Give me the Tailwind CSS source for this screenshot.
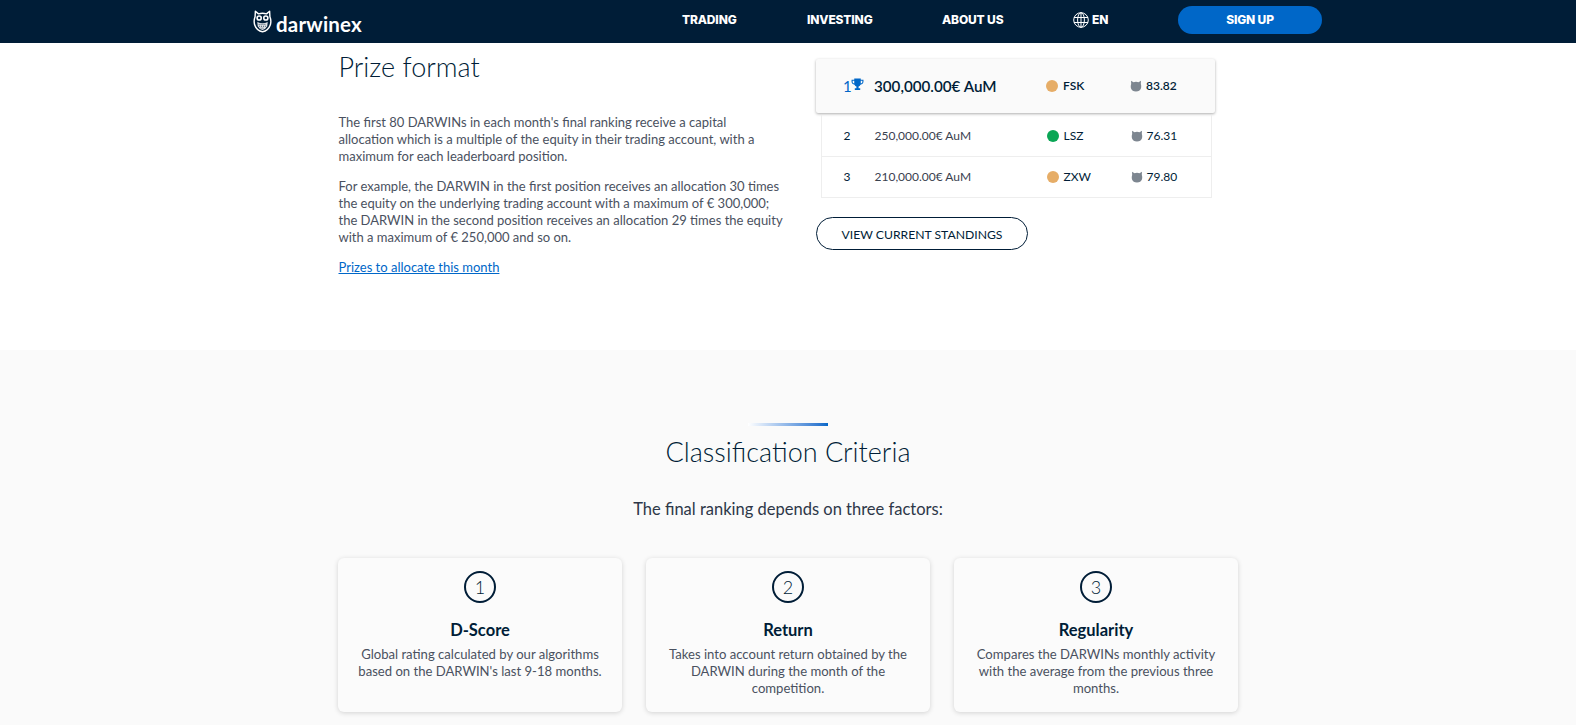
<!DOCTYPE html>
<html lang="en">
<head>
<meta charset="utf-8">
<title>Darwinex - Prize format</title>
<script src="https://cdn.jsdelivr.net/npm/@tailwindcss/browser@4"></script>
</head>
<body class="bg-white font-['Lato','Noto_Sans',sans-serif] text-[#4a5160] overflow-hidden">
<header class="h-[43px] bg-[#001d37] text-white">
  <div class="mx-auto flex h-full w-[1070px] items-center">
    <div class="mt-[5px] flex items-center gap-[4px]">
      <svg viewBox="0 0 20 24" class="h-[23px] w-[19px] -translate-y-[3px]" fill="none">
        <path d="M2.500 1.200 L5.800 4 Q10 2.800 14.200 4 L17.500 1.200 L17.800 7 Q19.500 11 18.300 15.500 Q16 22 10 22.800 Q4 22 1.700 15.500 Q.5 11 2.200 7 Z" fill="#001d37" stroke="#fff" stroke-width="1.500" stroke-linejoin="round"/>
        <circle cx="6.500" cy="8.300" r="3" fill="#fff"/><circle cx="13.500" cy="8.300" r="3" fill="#fff"/>
        <circle cx="6.500" cy="8.300" r="1.300" fill="#001d37"/><circle cx="13.500" cy="8.300" r="1.300" fill="#001d37"/>
        <path d="M4.500 12.500 Q10 15 15.500 12.500 L15 17 Q13 20.500 10 21 Q7 20.500 5 17 Z" fill="#dfe3e7"/>
        <path d="M6 15h8M6.500 17h7M8 19h4" stroke="#001d37" stroke-width=".8" stroke-dasharray="1 1"/>
      </svg>
      <span class="text-[20.5px] leading-none font-bold tracking-[0.2px] text-white">darwinex</span>
    </div>
    <nav class="mb-[3px] ml-[320px] flex items-center font-['Inter',sans-serif] text-[12px] font-extrabold tracking-[-0.15px]">
      <a class="w-[125px]">TRADING</a>
      <a class="w-[135px]">INVESTING</a>
      <a class="w-[131px]">ABOUT US</a>
      <span class="flex w-[105px] items-center gap-[3px]">
        <svg viewBox="0 0 16 16" class="size-[16px]" fill="none" stroke="#fff" stroke-width="1"><circle cx="8" cy="8" r="7.300"/><ellipse cx="8" cy="8" rx="3.400" ry="7.300"/><path d="M8 .7v14.600M1 5.500h14M1 10.500h14"/></svg>
        EN
      </span>
      <a class="flex h-[28px] w-[144px] items-center justify-center rounded-full bg-[#0067c8]">SIGN UP</a>
    </nav>
  </div>
</header>

<section class="h-[307px] bg-white">
  <div class="mx-auto flex w-[900px]">
    <div class="w-[478px] shrink-0 pr-[31px] pl-[0.5px]">
      <h2 class="mt-[6px] text-[27px] leading-[36px] font-light text-[#001d37]">Prize format</h2>
      <p class="mt-[29px] max-w-[436px] text-[13px] leading-[17px]">The first 80 DARWINs in each month's final ranking receive a capital allocation which is a multiple of the equity in their trading account, with a maximum for each leaderboard position.</p>
      <p class="mt-[13px] text-[13px] leading-[17px]">For example, the DARWIN in the first position receives an allocation 30 times the equity on the underlying trading account with a maximum of € 300,000; the DARWIN in the second position receives an allocation 29 times the equity with a maximum of € 250,000 and so on.</p>
      <a class="mt-[13px] block text-[13px] leading-[17px] text-[#0067c8] underline">Prizes to allocate this month</a>
    </div>
    <div class="w-[400px] pt-[16px] text-[#001d37]">
      <div class="grid h-[54px] w-[399px] grid-cols-[31px_172px_84px_1fr] items-center rounded-[2px] bg-[#fafafa] pl-[27px] shadow-[0_1px_3px_rgba(0,0,0,0.32)]">
        <span class="flex items-center text-[15px] text-[#0067c8]">1
          <svg viewBox="0 0 24 24" class="mb-[4px] -ml-[1px] size-[13px] shrink-0" fill="#0067c8"><path d="M6 1h12v2h5v4c0 3-2.500 5-5.500 5.300-.8 1.700-2.100 2.800-3.500 3.200V19h3v3H7v-3h3v-3.500c-1.400-.4-2.700-1.500-3.500-3.200C3.500 12 1 10 1 7V3h5V1zM3 5v2c0 1.700 1.300 3 3 3.300V5H3zm15 0v5.300c1.700-.3 3-1.600 3-3.300V5h-3z"/></svg>
        </span>
        <span class="text-[15.200px] font-semibold">300,000.00€ AuM</span>
        <span class="flex items-center gap-[5px] text-[12px] font-semibold"><i class="size-[12px] rounded-full bg-[#e6ad67]"></i>FSK</span>
        <span class="flex items-center gap-[4px] text-[12px] font-semibold"><svg viewBox="0 0 12 12" class="size-[12px]" fill="#7d8690"><path d="M1 .8l2.500 1.400a6 6 0 0 1 5 0L11 .8l-.2 3.200c1 2.500.7 7.500-4.800 7.500S.2 6.500 1.200 4z"/></svg>83.82</span>
      </div>
      <div class="mt-[2px] ml-[4.500px] w-[391px] border border-t-0 border-[#eeeeee] text-[12px]">
        <div class="grid h-[42px] grid-cols-[31px_172px_84px_1fr] items-center border-b border-[#eeeeee] pl-[22px]">
          <span>2</span><span class="text-[#39414f]">250,000.00€ AuM</span>
          <span class="flex items-center gap-[5px]"><i class="size-[12px] rounded-full bg-[#0aa655]"></i>LSZ</span>
          <span class="flex items-center gap-[4px]"><svg viewBox="0 0 12 12" class="size-[12px]" fill="#7d8690"><path d="M1 .8l2.500 1.400a6 6 0 0 1 5 0L11 .8l-.2 3.200c1 2.500.7 7.500-4.800 7.500S.2 6.500 1.200 4z"/></svg>76.31</span>
        </div>
        <div class="grid h-[40px] grid-cols-[31px_172px_84px_1fr] items-center pl-[22px]">
          <span>3</span><span class="text-[#39414f]">210,000.00€ AuM</span>
          <span class="flex items-center gap-[5px]"><i class="size-[12px] rounded-full bg-[#e6ad67]"></i>ZXW</span>
          <span class="flex items-center gap-[4px]"><svg viewBox="0 0 12 12" class="size-[12px]" fill="#7d8690"><path d="M1 .8l2.500 1.400a6 6 0 0 1 5 0L11 .8l-.2 3.200c1 2.500.7 7.500-4.800 7.500S.2 6.500 1.200 4z"/></svg>79.80</span>
        </div>
      </div>
      <a class="mt-[19px] flex h-[33px] w-[212px] items-center justify-center rounded-full border border-[#001d37] pt-[2px] text-[12.200px] leading-[18px] font-normal">VIEW CURRENT STANDINGS</a>
    </div>
  </div>
</section>

<section class="h-[375px] bg-[#fafafa] pt-[73px] text-center">
  <div class="mx-auto h-[3px] w-[80px] bg-gradient-to-r from-white to-[#0067c8]"></div>
  <h2 class="mt-[8px] text-[27px] leading-[36px] font-light text-[#001d37]">Classification Criteria</h2>
  <p class="mt-[27px] text-[16.500px] leading-[24px] text-[#2d3748]">The final ranking depends on three factors:</p>
  <div class="mx-auto mt-[37px] grid w-[900px] grid-cols-3 gap-[24px]">
    <article class="h-[154px] rounded-[6px] bg-[#fbfbfb] px-[16px] pt-[13px] shadow-[0_1px_5px_rgba(0,0,0,0.16)]">
      <div class="mx-auto flex size-[32px] items-center justify-center rounded-full border-2 border-[#001d37] text-[18px] font-light text-[#001d37]">1</div>
      <h3 class="mt-[15px] text-[16.500px] leading-[24px] font-bold text-[#001d37]">D-Score</h3>
      <p class="mt-[4px] text-[13.100px] leading-[17px]">Global rating calculated by our algorithms based on the DARWIN's last 9-18 months.</p>
    </article>
    <article class="h-[154px] rounded-[6px] bg-[#fbfbfb] px-[16px] pt-[13px] shadow-[0_1px_5px_rgba(0,0,0,0.16)]">
      <div class="mx-auto flex size-[32px] items-center justify-center rounded-full border-2 border-[#001d37] text-[18px] font-light text-[#001d37]">2</div>
      <h3 class="mt-[15px] text-[16.500px] leading-[24px] font-bold text-[#001d37]">Return</h3>
      <p class="mt-[4px] text-[13.100px] leading-[17px]">Takes into account return obtained by the DARWIN during the month of the competition.</p>
    </article>
    <article class="h-[154px] rounded-[6px] bg-[#fbfbfb] px-[16px] pt-[13px] shadow-[0_1px_5px_rgba(0,0,0,0.16)]">
      <div class="mx-auto flex size-[32px] items-center justify-center rounded-full border-2 border-[#001d37] text-[18px] font-light text-[#001d37]">3</div>
      <h3 class="mt-[15px] text-[16.500px] leading-[24px] font-bold text-[#001d37]">Regularity</h3>
      <p class="mt-[4px] text-[13.100px] leading-[17px]">Compares the DARWINs monthly activity with the average from the previous three months.</p>
    </article>
  </div>
</section>
</body>
</html>
